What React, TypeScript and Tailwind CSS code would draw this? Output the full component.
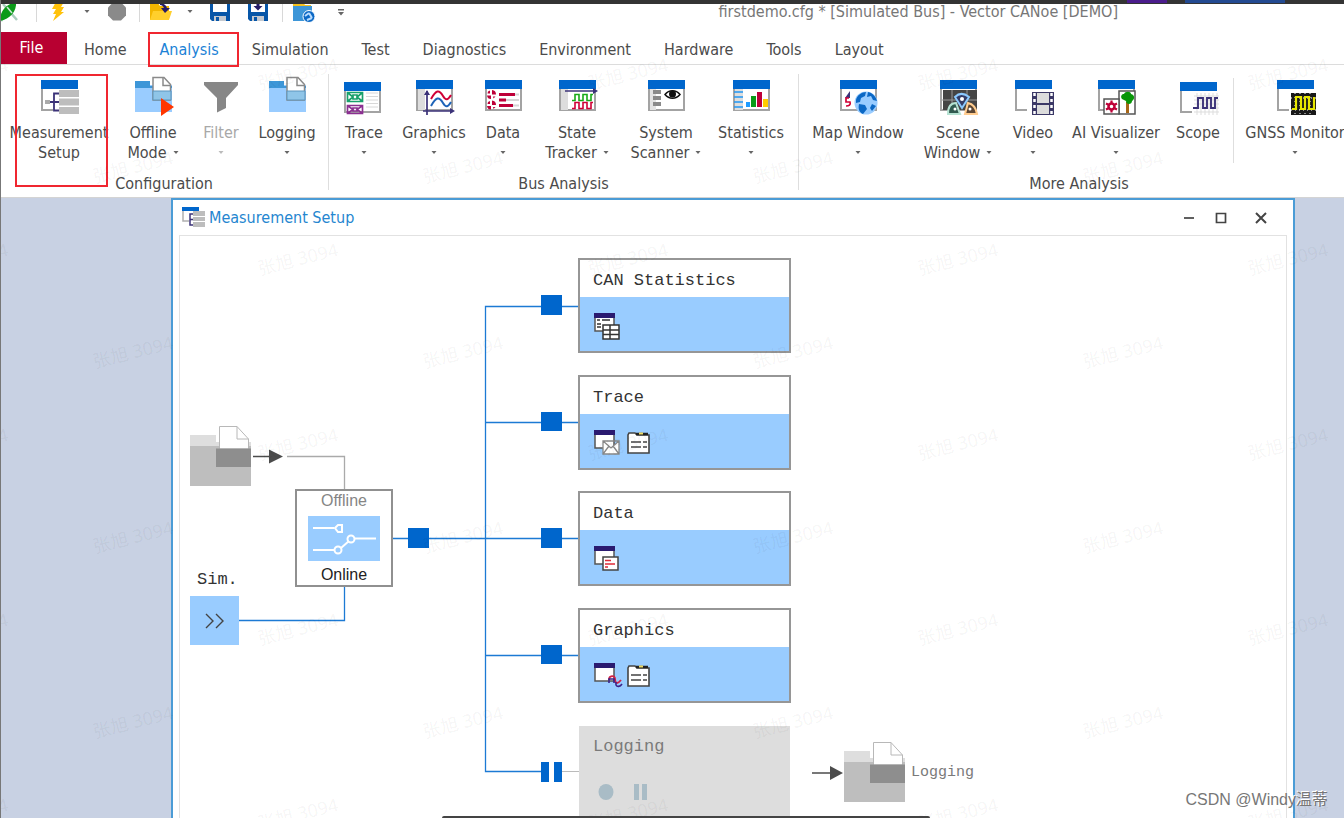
import type { ReactNode } from "react";

const BLUE = "#0066cc";

/* ---------- icons ---------- */

function Icon({ children }: { children: ReactNode }) {
  return (
    <svg viewBox="0 0 40 40" className="h-10 w-10 shrink-0 overflow-visible" fill="none" aria-hidden="true">
      {children}
    </svg>
  );
}

function Frame({ x = 2, y = 2, w = 37, h = 31, open = false }: { x?: number; y?: number; w?: number; h?: number; open?: boolean }) {
  return (
    <>
      {open ? (
        <path d={`M${x + 1} ${y}V${y + h - 1}H${x + 12}`} stroke="#a3a3a3" strokeWidth="2" />
      ) : (
        <rect x={x + 1} y={y + 1} width={w - 2} height={h - 2} fill="#fff" stroke="#a3a3a3" strokeWidth="2" />
      )}
      <rect x={x} y={y} width={w} height={9} fill={BLUE} />
    </>
  );
}

function SetupDrawing() {
  return (
    <>
      <Frame open />
      <path d="M7 24h8M21 15.500h-6v17h6M15 24h6" stroke="#3b3278" strokeWidth="1.800" />
      <rect x="6" y="22" width="5" height="4" fill="#aaa" />
      <g fill="#bdbdbd">
        <rect x="20" y="12" width="20" height="7" />
        <rect x="20" y="20.500" width="20" height="7" />
        <rect x="20" y="29" width="20" height="7" />
      </g>
    </>
  );
}

function SmallSetupDrawing() {
  return (
    <>
      <path d="M1 1v13h6" stroke="#b0b0b0" strokeWidth="1.500" />
      <path d="M0 0h17v4H0z" fill={BLUE} />
      <path d="M12 7H8v11h4M8 12.500h4" stroke="#3b3278" strokeWidth="1.500" />
      <path d="M11 4h12v5H11zM11 10h12v4H11zM11 15h12v5H11z" fill="#bdbdbd" />
    </>
  );
}

function FolderDrawing() {
  return (
    <>
      <path d="M2 7h37v27H2z" fill="#99ccff" />
      <path d="M2 3h15v5h22v2H2z" fill="#3d96d8" />
      <path d="M20-.500h11l6.500 7V22H20z" fill="#fff" stroke="#8a8a8a" strokeWidth="1.500" />
      <path d="M20 13h18v9H20z" fill="#8fc5e8" stroke="#5c95bd" />
      <path d="M30-.500v8h8" stroke="#8a8a8a" strokeWidth="1.500" />
    </>
  );
}

const ribbonIcons: Record<string, ReactNode> = {
  setup: <SetupDrawing />,
  offline: (
    <>
      <FolderDrawing />
      <path d="M28 20v18l13-9z" fill="#ff3600" />
    </>
  ),
  filter: <path d="M3 4h34v3L25 20v10l-9 4.500V20L3 7z" fill="#878787" />,
  logging: <FolderDrawing />,
  trace: (
    <>
      <Frame x={0} y={4} />
      <path d="M22 15h12M22 18.500h12M22 22h12M22 25.500h12M22 29h12" stroke="#d8d8d8" />
      <g strokeWidth="1.700">
        <path d="M3.500 14.500h15v9h-15zM4 15l5 4-5 4M18 15l-5 4 5 4M9 17h4v4H9z" stroke="#18a06b" />
        <path d="M3.500 27.500h15v8h-15zM4 28l5 3.500L4 35M18 28l-5 3.500 5 3.500M9 30h4v3H9z" stroke="#8b2f91" />
      </g>
    </>
  ),
  graphics: (
    <>
      <Frame />
      <path d="M4 11h7v21H4z" fill="#ddd" />
      <path d="M13 13v24M9 33h29" stroke="#3b3278" strokeWidth="1.700" />
      <path d="M10 17l3-5 3 5zM36 30l5 3-5 3z" fill="#3b3278" />
      <path d="M17 21c5-9 8-10 12-3 3 5 5 4 8-1" stroke="#d00036" strokeWidth="2" />
      <path d="M17 28c5-9 8-10 12-3 3 5 5 4 8-1" stroke="#1e64b8" strokeWidth="2" />
    </>
  ),
  data: (
    <>
      <Frame />
      <path d="M16 16.500h20M16 22h20M16 27.500h20" stroke="#d5d5d5" strokeWidth="2" />
      <path d="M16 16.500h16M16 22h7M16 27.500h14" stroke="#be0038" strokeWidth="3" />
      <path d="M9 16.500V12a4.500 4.500 0 0 1 4 4.500zM8 17.500V21a4 4 0 0 1-4-3.500zM5 13.500l2-1v3H4.500zM10 18.500h2.500l-2 2zM9 27V22.500a4.500 4.500 0 0 1 4 4.500zM8 28v3.500a4 4 0 0 1-4-3.500zM5 24l2-1v3H4.500zM10 29h2.500l-2 2z" fill="#be0038" />
    </>
  ),
  state: (
    <>
      <Frame />
      <path d="M4 11h7v21H4z" fill="#ddd" />
      <path d="M8 13h30" stroke="#3b3278" strokeWidth="1.500" />
      <path d="M36 10l5 3-5 3z" fill="#3b3278" />
      <path d="M15 22.500h3v-6h4v6h4v-6h4v6h4v-6h2" stroke="#18aa18" strokeWidth="1.600" />
      <path d="M15 30.500h3v-6h4v6h4v-6h4v6h4v-6h2" stroke="#d00036" strokeWidth="1.600" />
    </>
  ),
  system: (
    <>
      <Frame />
      <path d="M4 11h6v21H4z" fill="#e2e2e2" />
      <path d="M7 14h8M7 20h8M7 26h8" stroke="#8a8a8a" strokeWidth="4" />
      <path d="M19 16.500c4-5 11-5 15 0-4 5-11 5-15 0z" fill="#fff" stroke="#111" strokeWidth="1.500" />
      <circle cx="26.500" cy="16" r="3.500" fill="#111" />
    </>
  ),
  statistics: (
    <>
      <Frame />
      <path d="M4 11h8v21H4z" fill="#ddd" />
      <path d="M3 14h9M3 19h9M3 24h9M3 29h9" stroke="#2196f3" strokeWidth="1.700" />
      <path d="M15 24h4v5h-4z" fill="#1e9bff" />
      <path d="M20 18h5v11h-5z" fill="#0a9a16" />
      <path d="M26 14h5v15h-5z" fill="#be0038" />
      <path d="M32 21h5v8h-5z" fill="#ffcc00" />
    </>
  ),
  map: (
    <>
      <Frame />
      <path d="M7 20l5-7v7z" fill="#3b3278" />
      <path d="M11 20H8v4h4c1 3-1 4-4 4" stroke="#d00036" strokeWidth="1.700" />
      <circle cx="28" cy="25" r="11.500" fill="#99ccff" />
      <path d="M18 22c1-5 6-8 10-8l-1 4-4 2-1 4-4 1zM30 14c5 1 8 5 9 9l-4-1-2-4-4 1zM21 26l6 1 2 4-4 5c-4-2-5-5-4-10zM34 26l4 2-4 5-2-3z" fill="#0b68c5" />
    </>
  ),
  scene: (
    <>
      <Frame />
      <path d="M5 12h34v20H5z" fill="#454545" />
      <path d="M4 22h35M14 12v20M29 12v20" stroke="#999" />
      <path d="M17 19c4-4 9-4 14 0l-7 11z" fill="#333c66" stroke="#8bc9ff" strokeWidth="2" />
      <path d="M10 36c0-7 3-11 8-11l4 11z" fill="#315a4f" stroke="#b5e2d2" strokeWidth="2" />
      <path d="M27 36l3-11c5 1 8 5 9 11z" fill="#5b4633" stroke="#ffcc8f" strokeWidth="2" />
      <circle cx="24" cy="21" r="2" fill="#fff" />
      <circle cx="17" cy="31" r="1.500" fill="#fff" />
      <circle cx="32" cy="31" r="1.500" fill="#fff" />
    </>
  ),
  video: (
    <>
      <Frame open />
      <path d="M19 14h22v23H19z" fill="#3b3866" />
      <path d="M24 15h12v10H24zM24 27h12v9H24z" fill="#dcdcdc" />
      <path d="M21.500 15v22M38.500 15v22" stroke="#fff" strokeWidth="2.500" strokeDasharray="3 3" />
    </>
  ),
  ai: (
    <>
      <Frame />
      <path d="M23 13h16v23H23z" fill="#fff" stroke="#555" strokeWidth="1.500" />
      <path d="M30 24h3v11h-3z" fill="#a66618" />
      <path d="M26 21c-2-3 0-5 2-5 1-3 7-3 7 0 4 1 4 5 1 7 0 4-6 4-6 0z" fill="#089608" />
      <path d="M8 21h15v15H8z" fill="#fff" stroke="#555" strokeWidth="1.500" />
      <circle cx="15.500" cy="28.500" r="3" stroke="#be0038" strokeWidth="2.500" />
      <path d="M15.500 22.500v3M15.500 31.500v3M10 25.500l3 1.500M18 30l3 1.500M10 31.500l3-1.500M18 27l3-1.500" stroke="#be0038" strokeWidth="2.200" />
    </>
  ),
  scope: (
    <>
      <Frame y={4} open />
      <path d="M19 15v22M23 15v22M27 15v22M31 15v22M35 15v22M39 15v22M16 18h25M16 22h25M16 26h25M16 30h25M16 34h25" stroke="#ddd" />
      <path d="M15 30h5V20h5v10h4V20h4v10h4V20h3" stroke="#3b3278" strokeWidth="1.900" />
    </>
  ),
  gnss: (
    <>
      <Frame open />
      <path d="M16 15h25v22H16z" fill="#181818" />
      <path d="M20 15v22M25 15v22M30 15v22M35 15v22M16 20h25M16 32h25" stroke="#fff" strokeWidth="1" strokeDasharray="1 3" />
      <path d="M17 31h4V19h5v12h4V19h4v12h5V19" stroke="#e8e800" strokeWidth="2.200" />
    </>
  ),
};

function Caret({ pale = false }: { pale?: boolean }) {
  return (
    <svg viewBox="0 0 6 4" className="inline-block h-1 w-[6px]" aria-hidden="true">
      <path d="M.500 0h5L3 3z" fill={pale ? "#bbb" : "#666"} />
    </svg>
  );
}

/* ---------- quick access bar ---------- */

function QuickButton({ label, width, children }: { label: string; width: string; children: ReactNode }) {
  return (
    <button type="button" aria-label={label} className={`flex h-6 shrink-0 items-center justify-center ${width}`}>
      {children}
    </button>
  );
}

function QuickIcon({ children }: { children: ReactNode }) {
  return (
    <svg viewBox="0 0 24 24" className="h-6 w-6 shrink-0" fill="none" aria-hidden="true">
      {children}
    </svg>
  );
}

function Divider() {
  return <span className="h-5 w-px shrink-0 bg-[#d8d8d8]" />;
}

function Floppy({ arrow = false }: { arrow?: boolean }) {
  return (
    <QuickIcon>
      <path d="M2 1h20v20H4l-2-2z" fill="#0756a8" />
      <path d="M5 1h14v11H5z" fill="#fff" />
      <path d="M6 16h12v5H6z" fill="#c5c9cf" />
      <path d="M8 17h3v4H8z" fill="#0756a8" />
      {arrow && <path d="M10.500 2h3v4h3L12 10.500 7.500 6h3z" fill="#251c68" />}
    </QuickIcon>
  );
}

function QuickAccess() {
  return (
    <div className="flex shrink-0 items-center">
      <QuickButton label="CANoe" width="w-9">
        <svg viewBox="0 0 36 24" className="h-6 w-9" aria-hidden="true">
          <path d="M3 4l14 16M14 2L1 21" stroke="#a9cdbd" strokeWidth="2.500" />
          <path d="M0 21c0-10 6-17 16-19 1 9-6 17-16 19z" fill="#0b9a18" />
          <path d="M7 7l5 6" stroke="#cfe6da" strokeWidth="1.500" />
        </svg>
      </QuickButton>
      <Divider />
      <QuickButton label="Start" width="w-[42px]">
        <QuickIcon>
          <path d="M11 0h8l-4 7h3l-3 5h3L7 21l3-7H7l3-5H6z" fill="#ffc20a" />
        </QuickIcon>
      </QuickButton>
      <QuickButton label="Start options" width="w-4">
        <Caret />
      </QuickButton>
      <QuickButton label="Stop" width="w-11">
        <QuickIcon>
          <path d="M8 2.500h8l5 5v8l-5 5H8l-5-5v-8z" fill="#8a8a8a" />
        </QuickIcon>
      </QuickButton>
      <Divider />
      <QuickButton label="Open" width="w-[42px]">
        <QuickIcon>
          <path d="M1 3h8l2 3h9v14H1z" fill="#f2b600" />
          <path d="M1 20l3-9h19l-3 9z" fill="#ffcf2c" />
          <path d="M11 4c4-1 6 1 7 4h3l-5 5-4-5h3c-1-2-2-3-4-3z" fill="#251c68" />
        </QuickIcon>
      </QuickButton>
      <QuickButton label="Recent files" width="w-4">
        <Caret />
      </QuickButton>
      <QuickButton label="Save" width="w-11">
        <Floppy />
      </QuickButton>
      <QuickButton label="Save as" width="w-8">
        <Floppy arrow />
      </QuickButton>
      <span className="w-2 shrink-0" />
      <Divider />
      <QuickButton label="Network folder" width="w-[42px]">
        <QuickIcon>
          <path d="M1 2h10l2 3h6v5H1z" fill="#f4c11e" />
          <path d="M1 6h19v15H1z" fill="#3d96d8" />
          <circle cx="17" cy="16.500" r="6" fill="#0b68c5" stroke="#fff" />
          <path d="M13 16l4-3M17 13l3 5M20 18l-5 2" stroke="#b8dcff" strokeWidth="2" />
        </QuickIcon>
      </QuickButton>
      <QuickButton label="Customize toolbar" width="w-8">
        <svg viewBox="0 0 6 7" className="h-[7px] w-[6px]" aria-hidden="true">
          <path d="M0 0h6v1.500H0zM0 3h6L3 6.500z" fill="#666" />
        </svg>
      </QuickButton>
    </div>
  );
}

/* ---------- ribbon ---------- */

const tabs = ["Home", "Analysis", "Simulation", "Test", "Diagnostics", "Environment", "Hardware", "Tools", "Layout"];

type Tool = { icon: string; lines: string[]; width: string; caret?: boolean; disabled?: boolean };

const configuration: Tool[] = [
  { icon: "offline", lines: ["Offline", "Mode"], width: "w-[78px]", caret: true },
  { icon: "filter", lines: ["Filter"], width: "w-[58px]", caret: true, disabled: true },
  { icon: "logging", lines: ["Logging"], width: "w-[74px]", caret: true },
];

const busAnalysis: Tool[] = [
  { icon: "trace", lines: ["Trace"], width: "w-[70px]", caret: true },
  { icon: "graphics", lines: ["Graphics"], width: "w-[70px]", caret: true },
  { icon: "data", lines: ["Data"], width: "w-[68px]", caret: true },
  { icon: "state", lines: ["State", "Tracker"], width: "w-[80px]", caret: true },
  { icon: "system", lines: ["System", "Scanner"], width: "w-[98px]", caret: true },
  { icon: "statistics", lines: ["Statistics"], width: "w-[72px]", caret: true },
];

const moreAnalysis: Tool[] = [
  { icon: "map", lines: ["Map Window"], width: "w-[118px]", caret: true },
  { icon: "scene", lines: ["Scene", "Window"], width: "w-[82px]", caret: true },
  { icon: "video", lines: ["Video"], width: "w-[68px]", caret: true },
  { icon: "ai", lines: ["AI Visualizer"], width: "w-[98px]", caret: true },
  { icon: "scope", lines: ["Scope"], width: "w-[66px]" },
];

function ToolButton({ icon, lines, width, caret, disabled }: Tool) {
  return (
    <button
      type="button"
      disabled={disabled}
      className={`flex shrink-0 flex-col items-center whitespace-nowrap leading-5 ${width} ${disabled ? "text-[#a8a8a8]" : ""}`}
    >
      <Icon>{ribbonIcons[icon]}</Icon>
      <span className="mt-[5px] h-5">{lines[0]}</span>
      <span className="flex h-5 items-center gap-[6px]">
        {lines[1]}
        {caret && <Caret pale={disabled} />}
      </span>
    </button>
  );
}

function Group({ label, width, children }: { label: string; width: string; children: ReactNode }) {
  return (
    <section aria-label={label} className={`flex shrink-0 flex-col ${width}`}>
      <div className="flex">{children}</div>
      <div className="mt-[11px] text-center leading-5">{label}</div>
    </section>
  );
}

function GroupDivider() {
  return <span className="-mt-1 mb-1 w-px shrink-0 bg-[#dedede]" />;
}

function Ribbon() {
  return (
    <div className="flex shrink-0 overflow-hidden border-b border-[#d4d4d4] pt-[13px] pb-[3px]">
      <Group label="Configuration" width="w-[328px]">
        <div className="relative ml-1 shrink-0">
          <ToolButton icon="setup" lines={["Measurement", "Setup"]} width="w-[110px]" />
          <span className="pointer-events-none absolute -top-1 left-[11px] h-[113px] w-[93px] border-2 border-[#f02630]" />
        </div>
        {configuration.map((t) => (
          <ToolButton key={t.icon} {...t} />
        ))}
      </Group>
      <GroupDivider />
      <Group label="Bus Analysis" width="w-[469px]">
        {busAnalysis.map((t) => (
          <ToolButton key={t.icon} {...t} />
        ))}
      </Group>
      <GroupDivider />
      <Group label="More Analysis" width="w-[560px]">
        {moreAnalysis.map((t) => (
          <ToolButton key={t.icon} {...t} />
        ))}
        <span className="ml-[2px] w-px shrink-0 bg-[#dedede]" />
        <ToolButton icon="gnss" lines={["GNSS Monitor"]} width="w-[122px]" caret />
      </Group>
    </div>
  );
}

/* ---------- measurement diagram ---------- */

const blocks = [
  { name: "CAN Statistics", place: "top-[22px]", icons: ["stat"] },
  { name: "Trace", place: "top-[139px]", icons: ["mail", "filter"] },
  { name: "Data", place: "top-[255px]", icons: ["note"] },
  { name: "Graphics", place: "top-[372px]", icons: ["curve", "filter"] },
];

function BlockIcon({ kind }: { kind: string }) {
  if (kind === "filter") {
    return (
      <svg viewBox="0 0 28 28" className="h-7 w-7" fill="none" aria-hidden="true">
        <path d="M2 7V23h21V5H11L9 3H3L2 5z" fill="#fff" stroke="#444" strokeWidth="1.600" />
        <path d="M10 4h12" stroke="#222" strokeWidth="2.500" />
        <path d="M13 3.500h4" stroke="#eedb65" strokeWidth="2" />
        <path d="M5 12h10M17 12h4M5 17h10M17 17h4" stroke="#444" strokeWidth="1.500" />
      </svg>
    );
  }
  return (
    <svg viewBox="0 0 28 28" className="h-7 w-7 overflow-visible" fill="none" aria-hidden="true">
      <path d="M1 1h19v17H1z" fill="#fff" stroke="#555" strokeWidth="1.500" />
      <path d="M0 0h21v5H0z" fill="#2a1a70" />
      {kind === "stat" && (
        <>
          <path d="M3 7h3M8 7h8M3 11h4M3 14h4" stroke="#333" strokeWidth="1.300" />
          <path d="M9 12h16v14H9zM9 17h16M9 21.500h16M16 12v14" fill="#fff" stroke="#333" strokeWidth="1.500" />
        </>
      )}
      {kind === "mail" && <path d="M9 11h16v13H9zM9 11l8 7 8-7M9 24l6-8M25 24l-6-8" fill="#fff" stroke="#888" strokeWidth="1.300" />}
      {kind === "note" && (
        <>
          <path d="M9 11h15v13H9z" fill="#fff" stroke="#444" strokeWidth="1.500" />
          <path d="M11 14.500h6M11 18h10M11 21h3" stroke="#e02b38" strokeWidth="1.300" />
        </>
      )}
      {kind === "curve" && (
        <>
          <path d="M15 17c0-5 6-5 6-1s2 6 6 1" stroke="#d02246" strokeWidth="1.900" />
          <path d="M15 20v-4h5v4M22 19v3c1 2 4 2 6-1" stroke="#3a238a" strokeWidth="1.600" />
        </>
      )}
    </svg>
  );
}

function GrayFolder() {
  return (
    <svg viewBox="0 0 62 62" className="h-[62px] w-[62px]" fill="none" aria-hidden="true">
      <path d="M0 9h26v7h35v5H0z" fill="#dedede" />
      <path d="M0 20h61v40H0z" fill="#bebebe" />
      <path d="M29.500.500H47L58.500 13v10h-29z" fill="#fff" stroke="#b8b8b8" />
      <path d="M47 .500V13h11.500" stroke="#b8b8b8" />
      <path d="M26 22.500h35V41H26z" fill="#8e8e8e" />
    </svg>
  );
}

function Connectors() {
  return (
    <svg className="absolute top-0 left-0 h-[584px] w-[800px]" viewBox="180 236 800 584" fill="none" aria-hidden="true">
      <path d="M287 456.500H344.500V491" stroke="#aaa" strokeWidth="1.300" />
      <path d="M253 456.500H270M812 773H832" stroke="#4c4c4c" strokeWidth="1.500" />
      <path d="M269 449.500L283 456.500L269 463.500zM830 766L843 773L830 780z" fill="#4c4c4c" />
      <g stroke="#1c7ad4" strokeWidth="1.300">
        <path d="M239 620.500H344.500V587" />
        <path d="M392 538.500H579" />
        <path d="M579 306.500H485.500V771.500H541" />
        <path d="M485 422.500H579M485 655.500H579" />
      </g>
      <path d="M562 771.500H580" stroke="#bbb" />
      <g fill={BLUE}>
        <rect x="408" y="528" width="21" height="20" />
        <rect x="541" y="295" width="21" height="20" />
        <rect x="541" y="412" width="21" height="19" />
        <rect x="541" y="528" width="21" height="20" />
        <rect x="541" y="645" width="21" height="19" />
        <rect x="541" y="762" width="8" height="20" />
        <rect x="554" y="762" width="8" height="20" />
      </g>
    </svg>
  );
}

function Diagram() {
  return (
    <div className="relative min-h-[584px] flex-1 overflow-hidden border-x border-t border-[#e2e2e2] bg-white font-['Liberation_Mono',monospace] text-[17px] leading-5 text-[#333]">
      <Connectors />

      <div className="absolute top-[190px] left-[10px]">
        <GrayFolder />
      </div>

      <div className="absolute top-[253px] left-[115px] flex h-[98px] w-[98px] flex-col items-center justify-between border-2 border-[#909090] bg-white font-['Liberation_Sans',sans-serif] text-base leading-5">
        <span className="text-[#858585]">Offline</span>
        <svg viewBox="0 0 72 45" className="h-[45px] w-[72px] bg-[#99ccff]" fill="none" aria-hidden="true">
          <g stroke="#fff" strokeWidth="2">
            <path d="M5 12h21M5 34h21M33 32l8-7M47 22.500h21" />
            <path d="M27 12l3-3h4v7h-4z" />
            <circle cx="30" cy="34" r="3.500" />
            <circle cx="43" cy="23" r="3.500" />
          </g>
        </svg>
        <span className="text-[#222]">Online</span>
      </div>

      <div className="absolute top-[334px] left-[10px]">
        <div className="pl-[7px]">Sim.</div>
        <div className="mt-[6px] flex h-[49px] w-[49px] items-center justify-center bg-[#99ccff]">
          <svg viewBox="0 0 20 16" className="h-4 w-5" fill="none" stroke="#444" strokeWidth="1.400" aria-hidden="true">
            <path d="M1 1l7 7-7 7M11 1l7 7-7 7" />
          </svg>
        </div>
      </div>

      {blocks.map((b) => (
        <div key={b.name} className={`absolute left-[398px] flex h-[95px] w-[213px] flex-col border-2 border-[#969696] bg-white ${b.place}`}>
          <div className="flex h-[37px] items-center px-[13px] pt-1">{b.name}</div>
          <div className="flex flex-1 gap-1 bg-[#99ccff] px-[14px] pt-4">
            {b.icons.map((k) => (
              <BlockIcon key={k} kind={k} />
            ))}
          </div>
        </div>
      ))}

      <div className="absolute top-[490px] left-[399px] h-[120px] w-[211px] bg-[#dddddd] px-[14px] pt-[11px] text-[#7a7a7a]">
        Logging
        <svg viewBox="0 0 60 20" className="mt-[25px] h-5 w-[60px]" fill="#a9bcc6" aria-hidden="true">
          <ellipse cx="13" cy="10" rx="7.500" ry="8" />
          <path d="M41 2h5v16h-5zM49 2h5v16h-5z" />
        </svg>
      </div>

      <div className="absolute top-[506px] left-[664px] flex items-center gap-[5px] text-[15px] text-[#7a7a7a]">
        <GrayFolder />
        <span>Logging</span>
      </div>
    </div>
  );
}

function MeasurementWindow() {
  return (
    <main className="flex flex-1 overflow-hidden bg-[#c8d1e3] pr-[49px] pl-[171px]">
      <section aria-label="Measurement Setup" className="flex min-w-0 flex-1 flex-col border-x-2 border-t-2 border-[#4b9cd6] bg-white px-[6px]">
        <header className="flex h-[35px] shrink-0 items-center justify-between text-[#2586d0]">
          <h1 className="flex items-center gap-1 pl-[3px]">
            <svg viewBox="0 0 23 21" className="h-[21px] w-[23px]" fill="none" aria-hidden="true">
              <SmallSetupDrawing />
            </svg>
            Measurement Setup
          </h1>
          <div className="flex items-center pr-[10px]">
            <button type="button" aria-label="Minimize" className="flex h-7 w-8 items-center justify-center">
              <svg viewBox="0 0 12 12" className="h-3 w-3" aria-hidden="true"><path d="M1 6h10" stroke="#444" strokeWidth="1.700" /></svg>
            </button>
            <button type="button" aria-label="Maximize" className="flex h-7 w-8 items-center justify-center">
              <svg viewBox="0 0 12 12" className="h-3 w-3" aria-hidden="true"><path d="M1.500 1.500h9v9h-9z" fill="none" stroke="#444" strokeWidth="1.700" /></svg>
            </button>
            <button type="button" aria-label="Close" className="ml-2 flex h-7 w-8 items-center justify-center">
              <svg viewBox="0 0 12 12" className="h-3 w-3" aria-hidden="true"><path d="M1 1l10 10M11 1L1 11" stroke="#444" strokeWidth="2" /></svg>
            </button>
          </div>
        </header>
        <Diagram />
      </section>
    </main>
  );
}

/* ---------- watermark ---------- */

const marks = [0, 1, 2, 3, 4, 5, 6, 7, 8].flatMap((row) =>
  [0, 1, 2, 3, 4].map((col) => ({ x: col * 330 - 32 + (row % 2 ? 165 : 0), y: 74 + row * 92.5 })),
);

function Watermark() {
  return (
    <div aria-hidden="true" className="pointer-events-none absolute inset-0 overflow-hidden">
      {marks.map((m) => (
        <span
          key={`${m.x}-${m.y}`}
          className="absolute -translate-x-1/2 -translate-y-1/2 -rotate-[14deg] font-['Noto_Sans','Noto_Sans_CJK_SC',sans-serif] text-[18px] whitespace-nowrap text-black/5"
          style={{ left: m.x, top: m.y }}
        >
          张旭 3094
        </span>
      ))}
    </div>
  );
}

export default function App() {
  return (
    <div className="relative flex h-screen flex-col overflow-hidden bg-white font-['DejaVu_Sans_Condensed','Noto_Sans',sans-serif] text-base text-[#4b4b4b]">
      <div className="relative flex h-8 shrink-0 items-start">
        <QuickAccess />
        <div className="ml-auto pr-[226px] leading-6 whitespace-nowrap text-[#777]">
          firstdemo.cfg * [Simulated Bus] - Vector CANoe [DEMO]
        </div>
        <div className="absolute inset-x-0 top-0 h-1 bg-[#343434]">
          <span className="absolute top-0 right-[177px] h-[3px] w-10 bg-[#4b1c8c]" />
          <span className="absolute top-0 right-[59px] h-[3px] w-[100px] bg-[#234a91]" />
        </div>
      </div>

      <nav aria-label="Ribbon tabs" className="flex h-[33px] shrink-0 gap-px border-b border-[#dcdcdc]">
        <button type="button" className="w-[67px] shrink-0 bg-[#b80031] pr-1 text-white">
          File
        </button>
        {tabs.map((t) => (
          <button
            key={t}
            type="button"
            className={`relative shrink-0 px-4 pt-1 ${t === "Analysis" ? "text-[#1b82d6]" : ""}`}
          >
            {t}
            {t === "Analysis" && <span className="absolute top-0 -right-1 -bottom-[3px] left-1 border-2 border-[#f02630]" />}
          </button>
        ))}
      </nav>

      <Ribbon />
      <MeasurementWindow />
      <Watermark />

      <div className="absolute right-4 bottom-[6px] font-['Liberation_Sans','Noto_Sans_CJK_SC',sans-serif] text-base text-[#777] [text-shadow:-1px_-1px_0_#fff]">
        CSDN @Windy温蒂
      </div>
      <div className="absolute bottom-0 left-[442px] h-[2px] w-[488px] rounded-t bg-[#444]" />
      <div className="absolute inset-y-0 left-0 w-px bg-[#777]" />
    </div>
  );
}
